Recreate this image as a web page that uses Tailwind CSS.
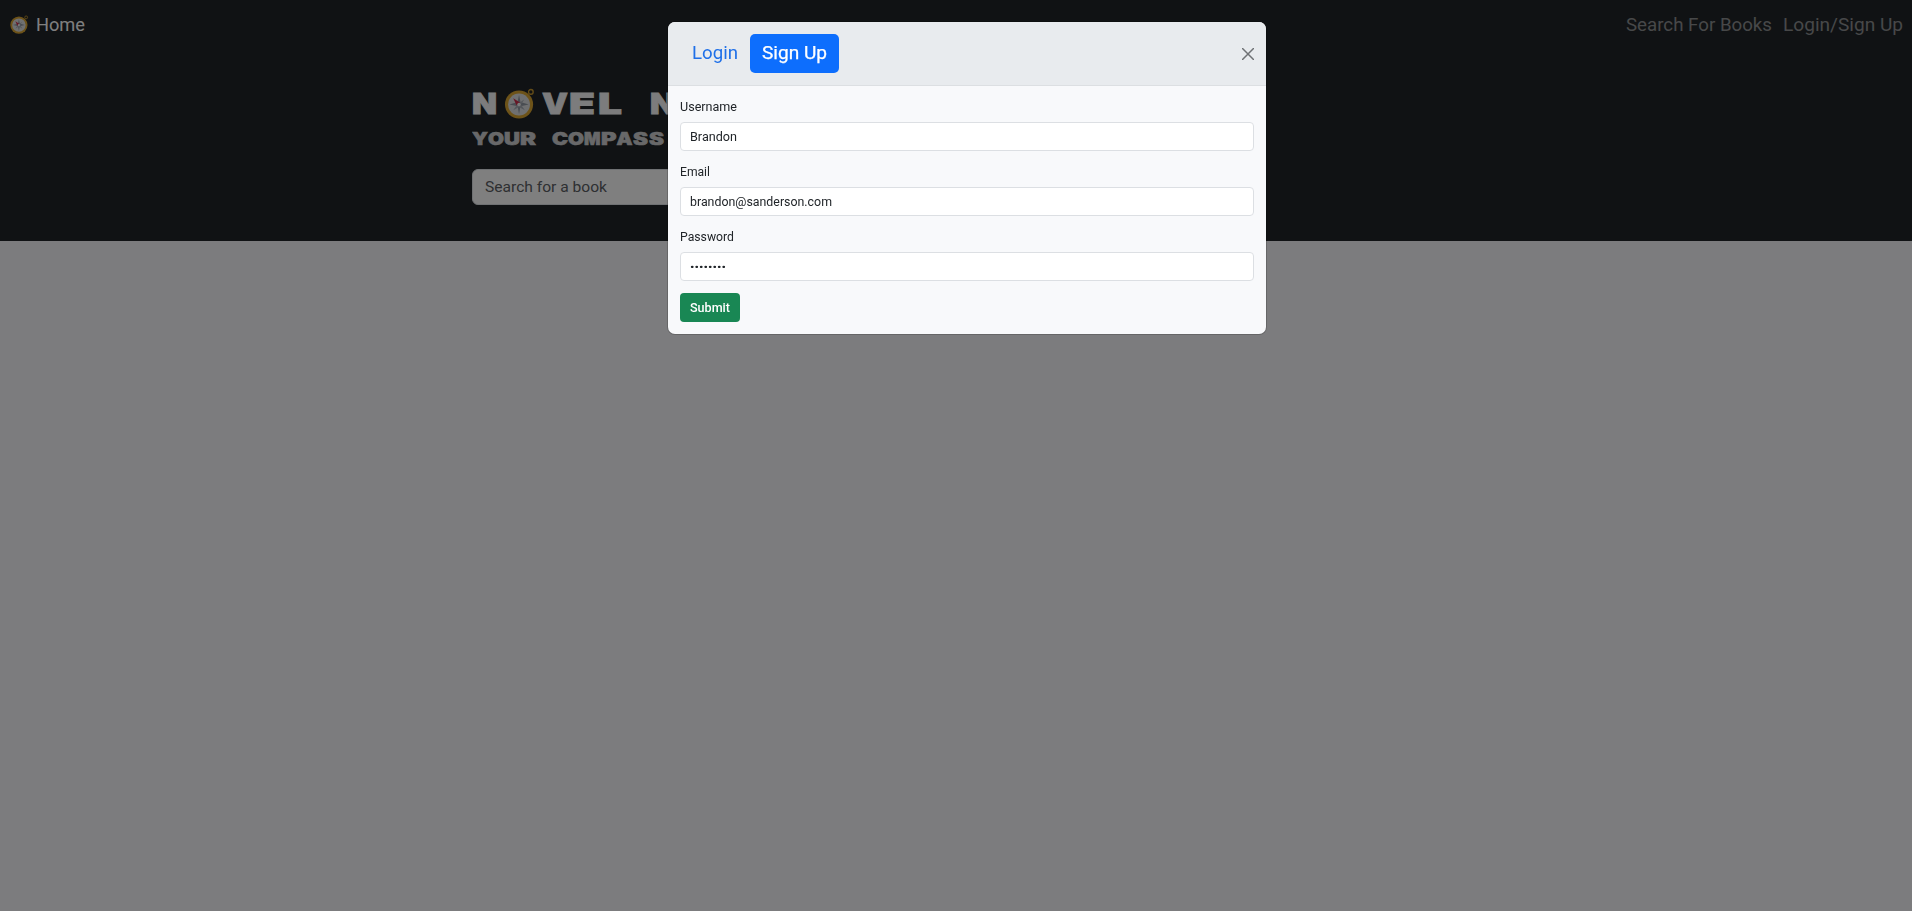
<!DOCTYPE html>
<html lang="en">
<head>
<meta charset="utf-8">
<title>Novel Navigator</title>
<script src="https://cdn.jsdelivr.net/npm/@tailwindcss/browser@4"></script>
</head>
<body class="h-screen overflow-hidden bg-[#f9f9fc] font-['Roboto',sans-serif] text-[#212529]">
<svg class="hidden">
  <symbol id="compass" viewBox="0 0 32 32">
    <circle cx="27.200" cy="4" r="2.400" fill="none" stroke="#c9992f" stroke-width="1.400"/>
    <circle cx="15" cy="17" r="14.500" fill="#dba632"/>
    <circle cx="15" cy="17" r="11.300" fill="#dfe0e3"/>
    <path d="M15 7l1.500 7.500L25 17l-8.500 1.800L15 27l-1.500-8.200L5 17l8.500-2.500z" fill="#929aa4"/>
    <path d="M20.500 11.500L17 17l4 6-6-3.500-6 3.500 4-6z" fill="#aab0b8"/>
    <path d="M9 10.500l7 4.500-3.500 3z" fill="#cf2f4c"/>
    <circle cx="15" cy="17" r="1.800" fill="#f4f4f4"/>
  </symbol>
</svg>
<div class="h-[241px] bg-[#212529]">
  <nav class="flex h-[49px] items-center justify-between pl-[10px] pr-[9px] text-[18px]">
    <a class="flex items-center gap-[7px] text-white"><svg class="size-[19px]"><use href="#compass"/></svg><svg class="h-6 w-[52px]"><text x="0" y="18" fill="currentColor" textLength="49" lengthAdjust="spacingAndGlyphs">Home</text></svg></a>
    <div class="flex gap-[11px] text-[#8f9193]">
      <svg class="h-6 w-[146px]"><text x="0" y="18" fill="currentColor" textLength="146" lengthAdjust="spacingAndGlyphs">Search For Books</text></svg>
      <svg class="h-6 w-[120px]"><text x="0" y="18" fill="currentColor" textLength="120" lengthAdjust="spacingAndGlyphs">Login/Sign Up</text></svg>
    </div>
  </nav>
  <main class="ml-[472px] w-[640px] pt-[35px]">
    <svg class="block h-[42px] w-[640px] font-['Inter'] text-[29px] font-black" fill="#f8f9fa">
      <g stroke="#f8f9fa" stroke-width=".8">
      <text x="0" y="30" textLength="25" lengthAdjust="spacingAndGlyphs">N</text>
      <text x="70" y="30" textLength="26" lengthAdjust="spacingAndGlyphs">V</text>
      <text x="97" y="30" textLength="26" lengthAdjust="spacingAndGlyphs">E</text>
      <text x="126" y="30" textLength="24" lengthAdjust="spacingAndGlyphs">L</text>
      <text x="178" y="30" textLength="25" lengthAdjust="spacingAndGlyphs">N</text>
      </g>
      <use href="#compass" x="32.500" y="4" width="31" height="31"/>
    </svg>
    <svg class="block h-[43px] w-[640px] font-['Inter'] text-[17px] font-black" fill="#d0d1d3" stroke="#d0d1d3" stroke-width=".6">
      <text x="0" y="19" textLength="16" lengthAdjust="spacingAndGlyphs">Y</text>
      <text x="16" y="19" textLength="16" lengthAdjust="spacingAndGlyphs">O</text>
      <text x="32" y="19" textLength="16" lengthAdjust="spacingAndGlyphs">U</text>
      <text x="48" y="19" textLength="16" lengthAdjust="spacingAndGlyphs">R</text>
      <text x="80" y="19" textLength="16" lengthAdjust="spacingAndGlyphs">C</text>
      <text x="96" y="19" textLength="16" lengthAdjust="spacingAndGlyphs">O</text>
      <text x="112" y="19" textLength="16.500" lengthAdjust="spacingAndGlyphs">M</text>
      <text x="129" y="19" textLength="15.500" lengthAdjust="spacingAndGlyphs">P</text>
      <text x="144.500" y="19" textLength="16" lengthAdjust="spacingAndGlyphs">A</text>
      <text x="161" y="19" textLength="15" lengthAdjust="spacingAndGlyphs">S</text>
      <text x="177" y="19" textLength="15" lengthAdjust="spacingAndGlyphs">S</text>
    </svg>
    <div class="flex h-9 w-[520px] items-center rounded-md border border-[#dee2e6] bg-white px-[12px]">
      <svg class="h-6 w-[130px] text-[15px]"><text x="0" y="17" fill="#5c6065" textLength="122" lengthAdjust="spacingAndGlyphs">Search for a book</text></svg>
    </div>
  </main>
</div>
<div class="fixed inset-0 bg-black/50">
  <section class="ml-[668px] mt-[22px] h-[312px] w-[598px] overflow-hidden rounded-[7px] bg-[#f8f9fb] shadow-[0_0_0_1px_rgba(0,0,0,.18)]">
    <header class="flex h-[64px] items-start justify-between border-b border-[#dcdfe2] bg-[#e8ebee] px-3 pt-3 text-[18px]">
      <div class="flex">
        <svg class="ml-3 h-[39px] w-[58px]"><text x="0" y="25" fill="#1f70e8" textLength="46" lengthAdjust="spacingAndGlyphs">Login</text></svg>
        <button class="h-[39px] w-[89px] rounded-[5px] bg-[#0d6efd] px-3"><svg class="h-[39px] w-[66px]"><text x="0" y="25" fill="white" stroke="white" stroke-width=".25" textLength="65" lengthAdjust="spacingAndGlyphs">Sign Up</text></svg></button>
      </div>
      <svg class="mt-[14px] size-3" viewBox="0 0 12 12" fill="none" stroke="#6f7275" stroke-width="1.500" stroke-linecap="round"><path d="M.5.500l11 11M11.500.500L.5 11.500"/></svg>
    </header>
    <form class="px-3 pt-3 text-[12px] text-[#212529]">
      <label class="flex h-[24px] items-start leading-[18px]"><svg class="h-[18px] w-[60px]"><text x="0" y="13" fill="currentColor" textLength="57" lengthAdjust="spacingAndGlyphs">Username</text></svg></label>
      <div class="mb-3 flex h-[29px] items-center rounded-[4px] border border-[#dcdfe3] bg-white px-[9px]"><svg class="h-[18px] w-[60px]"><text x="0" y="13" fill="currentColor" textLength="47" lengthAdjust="spacingAndGlyphs">Brandon</text></svg></div>
      <label class="flex h-[24px] items-start leading-[18px]"><svg class="h-[18px] w-[60px]"><text x="0" y="13" fill="currentColor" textLength="30" lengthAdjust="spacingAndGlyphs">Email</text></svg></label>
      <div class="mb-3 flex h-[29px] items-center rounded-[4px] border border-[#dcdfe3] bg-white px-[9px]"><svg class="h-[18px] w-[150px]"><text x="0" y="13" fill="currentColor" textLength="142" lengthAdjust="spacingAndGlyphs">brandon@sanderson.com</text></svg></div>
      <label class="flex h-[24px] items-start leading-[18px]"><svg class="h-[18px] w-[60px]"><text x="0" y="13" fill="currentColor" textLength="54" lengthAdjust="spacingAndGlyphs">Password</text></svg></label>
      <div class="mb-3 flex h-[29px] items-center rounded-[4px] border border-[#dcdfe3] bg-white px-[9px]"><svg class="h-[18px] w-[60px] text-[10px]"><text x="0" y="13" fill="currentColor" textLength="36" lengthAdjust="spacingAndGlyphs">••••••••</text></svg></div>
      <button class="block h-[29px] w-[60px] rounded-[4px] bg-[#198754] px-[10px] font-medium"><svg class="h-[29px] w-10"><text x="0" y="19" fill="white" textLength="40" lengthAdjust="spacingAndGlyphs">Submit</text></svg></button>
    </form>
  </section>
</div>
</body>
</html>
